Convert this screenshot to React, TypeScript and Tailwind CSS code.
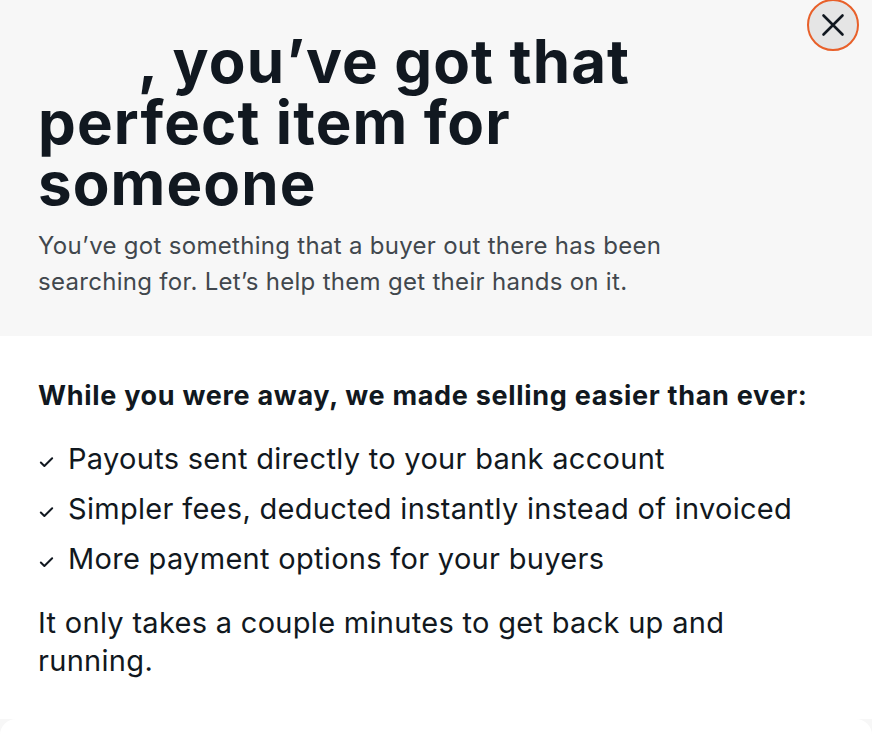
import { Check } from 'lucide-react'

const perks = [
  'Payouts sent directly to your bank account',
  'Simpler fees, deducted instantly instead of invoiced',
  'More payment options for your buyers',
]

export default function App() {
  return (
    <div className="w-[872px] h-[737px] overflow-hidden bg-white flex flex-col text-[#111820]" style={{ fontFamily: 'Inter, "Noto Sans", sans-serif' }}>
      <div className="relative bg-[#f7f7f7] h-[336px] shrink-0 pl-[38px] pt-[31px]">
        <h1 className="text-[60px] leading-[61px] font-bold tracking-[1.1px] w-[640px]">
          <span className="inline-block w-[100px]" />, you’ve got that perfect item for someone
        </h1>
        <p className="mt-[14px] text-[24px] leading-[36px] tracking-[0.3px] text-[#41474d] w-[660px]">
          You’ve got something that a buyer out there has been searching for. Let’s help them get their hands on it.
        </p>
        <button className="absolute right-[13px] top-[-1px] w-[52px] h-[52px] rounded-full bg-[#e5e5e5] border-2 border-[#e8602a] flex items-center justify-center">
          <svg width="24" height="24" viewBox="0 0 24 24" fill="none" stroke="#111820" strokeWidth="2.6" strokeLinecap="round">
            <path d="M2.5 2.5L21.5 21.5M21.5 2.5L2.5 21.5" />
          </svg>
        </button>
      </div>

      <div className="flex-1 pl-[38px] pt-[44px]">
        <h2 className="text-[27px] leading-[32px] font-bold tracking-[0.7px]">While you were away, we made selling easier than ever:</h2>
        <ul className="mt-[22px] flex flex-col">
          {perks.map((p) => (
            <li key={p} className="flex items-center h-[50px] text-[29px] tracking-[0.3px]">
              <Check size={17} strokeWidth={2.8} className="mr-[13px] mt-[6px] shrink-0" />
              {p}
            </li>
          ))}
        </ul>
        <p className="mt-[20px] text-[29px] leading-[38px] tracking-[0.3px] w-[720px]">
          It only takes a couple minutes to get back up and running.
        </p>
      </div>

      <div className="h-[18px] shrink-0 bg-[#f7f7f7]">
        <div className="h-full bg-white rounded-t-[16px]" />
      </div>
    </div>
  )
}
